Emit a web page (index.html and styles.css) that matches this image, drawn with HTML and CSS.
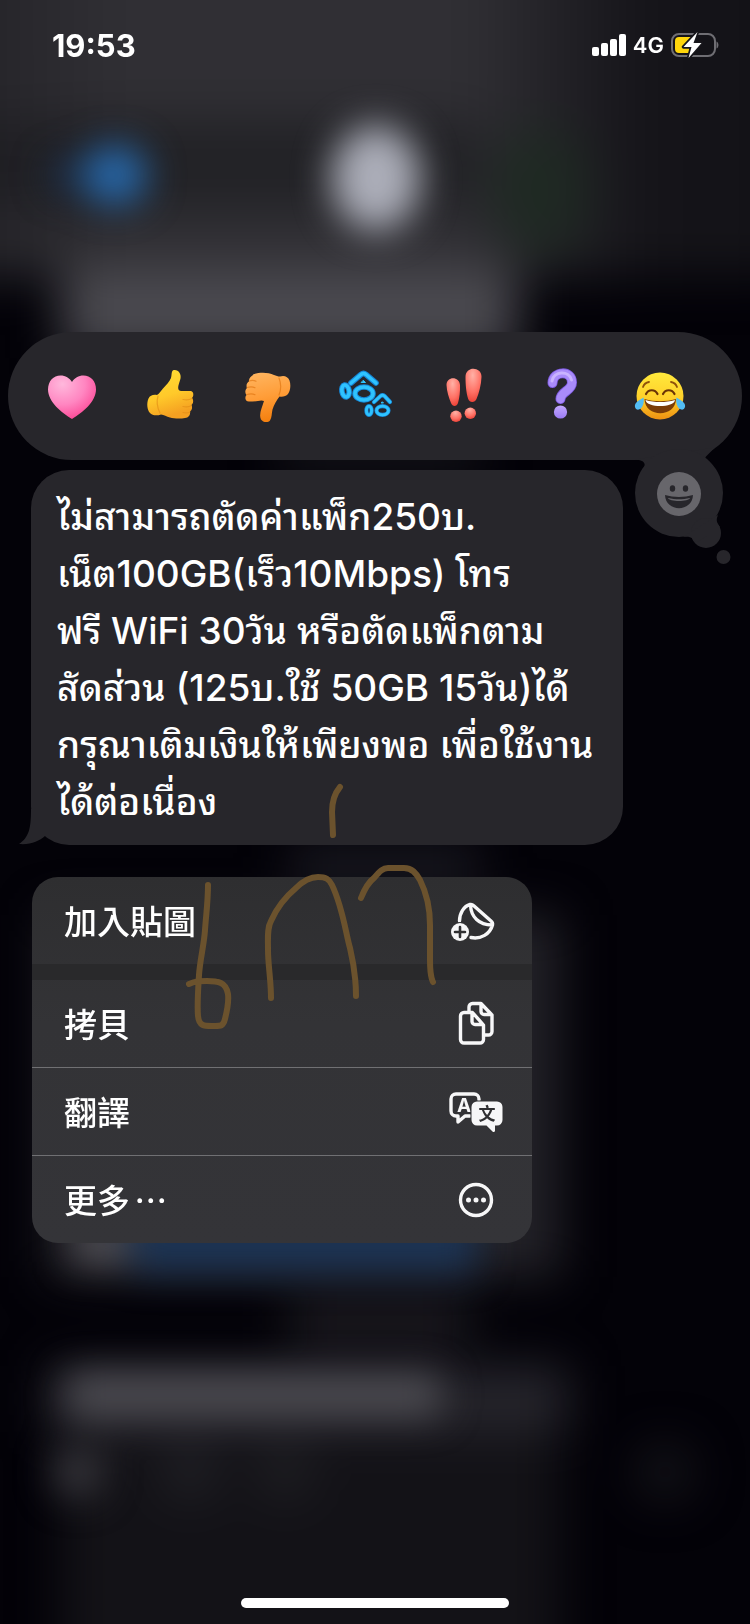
FILE: index.html
```html
<!DOCTYPE html>
<html lang="zh-Hant">
<head>
<meta charset="utf-8">
<meta name="viewport" content="width=device-width, initial-scale=1">
<title>訊息</title>
<link rel="stylesheet" href="styles.css">
</head>
<body>
<div class="screen">
  <svg class="backdrop" viewBox="0 0 750 1624" preserveAspectRatio="none" aria-hidden="true">
    <defs>
      <filter id="soft" x="-50%" y="-50%" width="200%" height="200%" color-interpolation-filters="sRGB"><feGaussianBlur stdDeviation="24"/></filter>
      <filter id="mid" x="-80%" y="-80%" width="260%" height="260%" color-interpolation-filters="sRGB"><feGaussianBlur stdDeviation="18"/></filter>
      <linearGradient id="head" x1="0" x2="1" y1="0" y2="0">
        <stop offset="0" stop-color="#212025"/><stop offset=".22" stop-color="#302f34"/><stop offset=".6" stop-color="#302f34"/><stop offset=".8" stop-color="#151419"/><stop offset="1" stop-color="#121116"/>
      </linearGradient>
    </defs>
    <rect width="750" height="1624" fill="#030208"/>
    <g filter="url(#soft)">
      <rect x="-80" y="-80" width="910" height="358" fill="url(#head)"/>
      <rect x="-80" y="120" width="560" height="88" fill="#1d1c21" opacity=".7"/>
      <ellipse cx="540" cy="190" rx="50" ry="64" fill="#1f2923"/>
      <rect x="62" y="268" width="455" height="90" fill="#4a494f"/>
      <rect x="280" y="440" width="200" height="30" fill="#1a191f"/>
      <rect x="290" y="850" width="190" height="30" fill="#22212a"/>
      <rect x="48" y="915" width="512" height="362" fill="#232228"/>
      <rect x="290" y="1302" width="180" height="40" fill="#1f1e23"/>
      <rect x="48" y="1366" width="520" height="66" fill="#26252c"/>
      <rect x="60" y="1430" width="500" height="290" fill="#131217"/>
      <circle cx="665" cy="1472" r="28" fill="#15141a"/>
      <circle cx="190" cy="1472" r="26" fill="#222227"/>
      <circle cx="285" cy="1472" r="26" fill="#202024"/>
    </g>
    <g filter="url(#mid)">
      <ellipse cx="72" cy="175" rx="24" ry="16" fill="#1c2f49"/>
      <ellipse cx="115" cy="175" rx="32" ry="30" fill="#2768aa"/>
      <ellipse cx="376" cy="178" rx="45" ry="53" fill="#acaeb9"/>
      <rect x="72" y="1225" width="56" height="38" fill="#535258"/>
      <rect x="132" y="1210" width="344" height="62" fill="#1c3455"/>
      <rect x="66" y="1374" width="376" height="42" rx="12" fill="#4d4c52"/>
      <circle cx="78" cy="1472" r="26" fill="#35343a"/>
    </g>
  </svg>

  <header class="status">
    <time class="clock">19:53</time>
    <div class="signals">
      <svg class="bars" width="34" height="22" viewBox="0 0 34 22" fill="#fff" role="img" aria-label="訊號">
        <rect y="13" width="7" height="9" rx="2"/><rect x="9" y="9" width="7" height="13" rx="2"/><rect x="18" y="5" width="7" height="17" rx="2"/><rect x="27" width="7" height="22" rx="2"/>
      </svg>
      <span class="network">4G</span>
      <svg class="battery" width="48" height="26" viewBox="0 0 48 26" role="img" aria-label="充電中">
        <rect x="1" y="2" width="43" height="22" rx="7" fill="none" stroke="#6f6e73" stroke-width="2"/>
        <path d="M45.500 9.500c2.600 1 2.600 6 0 7z" fill="#6f6e73"/>
        <path d="M8 5h14l-8 10h6l-2 6H8a4 4 0 0 1-4-4V9a4 4 0 0 1 4-4z" fill="#ffd60b"/>
        <path d="M26.500 0 12.500 15h8l-3 11 13-15h-8z" fill="#fff" stroke="#17161b" stroke-width="3.400" paint-order="stroke" stroke-linejoin="round"/>
      </svg>
    </div>
  </header>

  <main class="content">
    <section class="reactions" aria-label="點按回應">
      <div class="reaction-bar">
        <button class="reaction" aria-label="愛心">
          <svg viewBox="0 0 60 60"><defs><radialGradient id="h" cx=".3" cy=".2" r=".85"><stop offset="0" stop-color="#ffb8dc"/><stop offset=".55" stop-color="#ff86c1"/><stop offset="1" stop-color="#fb4795"/></radialGradient></defs>
          <path d="M30 53C20 47 6 36 6 23.500 6 15 11.500 9.500 18.500 9.500c5 0 9 2.500 11.500 6.500 2.500-4 6.500-6.500 11.500-6.500C48.500 9.500 54 15 54 23.500 54 36 40 47 30 53z" fill="url(#h)"/></svg>
        </button>
        <button class="reaction" aria-label="讚">
          <svg viewBox="0 0 60 60"><defs><linearGradient id="t" x1="0" x2=".3" y1="0" y2="1"><stop offset="0" stop-color="#ffe035"/><stop offset=".6" stop-color="#ffc92a"/><stop offset="1" stop-color="#f5a021"/></linearGradient></defs>
          <path d="M34 4c4.500-.5 7.500 4 6.500 8.500-1 4-3 8-2 11 .5 1.500 2 1.500 4 1.500h8c3.500 0 3.500 5.500 1.500 7 1.800 2 1.500 5.500-.5 7 1.200 2.500.5 5-1.500 6.500.5 4-1.500 6-5 6.600-4.500.8-11 .7-15-.6-3.500-1-6-2.500-9-3-4 1.500-9 1-11-1.500C7 44 6.500 37 8.500 32.500c1.500-3 4.500-4.200 8.500-3.500 2.500-1.500 4-4.500 6-6.500 3-3.500 6.500-6.500 8-10.500C32 9 31 4.500 34 4z" fill="url(#t)"/>
          <path d="M43 33.500c4 .8 6 .7 9-1M43 40.500c4 .8 6 .7 8.500-1M43 46.500c3 .8 5 .7 7-.5M18 30c-1.500 5-.5 12 2 17" fill="none" stroke="#e08a14" stroke-width="1.200" stroke-linecap="round" opacity=".6"/></svg>
        </button>
        <button class="reaction" aria-label="倒讚">
          <svg viewBox="0 0 60 60"><defs><linearGradient id="d" x1="0" x2=".2" y1="0" y2="1"><stop offset="0" stop-color="#ffb763"/><stop offset=".55" stop-color="#ff9d38"/><stop offset="1" stop-color="#f58212"/></linearGradient></defs>
          <path d="M15 8.500C21 6 30 6 36 9c2 .8 4 1.500 6 1.500 4-1.500 8 0 9.500 4 1.500 4.500 1 10-1.500 13.500-2 2.500-5.500 3-8.500 2.500-3 4-5.500 8-7 13-1 4-.5 8-2.500 11-2 2.500-7 2-9-1-2.500-5 1-12 3-18.500-2-1-4-.5-6 0-3 .5-6 .5-9 .5-4 0-4.500-4.500-2.500-6.500-1.800-2-1.500-5.500.5-7-1.200-3 0-5.500 2-6.500-.3-3 1.500-5 4-6.500z" fill="url(#d)"/>
          <path d="M9 28.500c3-1 6-.8 8 .2M9 21.500c3-1 6-.8 8 .2M11 15c3-1 5-.8 7 .2M41 12c2 5 2 12 0 17" fill="none" stroke="#dc6f0c" stroke-width="1.200" stroke-linecap="round" opacity=".6"/></svg>
        </button>
        <button class="reaction" aria-label="哈哈">
          <svg viewBox="0 0 60 60" fill="none" stroke-linecap="round" stroke-linejoin="round">
            <g stroke="#1687d8" stroke-width="5.600"><path d="M15 17 25 8.500q2.500-2 5 0L40 17"/><ellipse cx="28" cy="27.500" rx="9" ry="6.500"/><ellipse cx="9.500" cy="25" rx="3.600" ry="6" transform="rotate(-10 9.500 25)"/><path d="m38 36 6.500-6q2-1.500 4 0l5.500 6" stroke-width="4.200"/><ellipse cx="46.500" cy="44.500" rx="6" ry="4.300" stroke-width="4.200"/><ellipse cx="33" cy="44.500" rx="2.600" ry="4.300" stroke-width="4.200"/></g>
            <g stroke="#2fc3ff" stroke-width="3.600"><path d="M15 17 25 8.500q2.500-2 5 0L40 17"/><ellipse cx="28" cy="27.500" rx="9" ry="6.500"/><ellipse cx="9.500" cy="25" rx="3.600" ry="6" transform="rotate(-10 9.500 25)"/><path d="m38 36 6.500-6q2-1.500 4 0l5.500 6" stroke-width="2.800"/><ellipse cx="46.500" cy="44.500" rx="6" ry="4.300" stroke-width="2.800"/><ellipse cx="33" cy="44.500" rx="2.600" ry="4.300" stroke-width="2.800"/></g>
            <path d="m27.500 14.500 2 2h-4zM46.500 36l1 1h-2z" fill="#2fc3ff" stroke="#2fc3ff"/>
          </svg>
        </button>
        <button class="reaction" aria-label="強調">
          <svg viewBox="0 0 60 60"><defs><radialGradient id="e" cx=".45" cy=".2" r=".85"><stop offset="0" stop-color="#ffb1a6"/><stop offset=".6" stop-color="#ff7165"/><stop offset="1" stop-color="#e93d32"/></radialGradient></defs>
          <g fill="url(#e)"><path d="M12.500 19c0-9 13-9 13.500 0 .3 6-.5 13-2 18-1.200 4-5.500 4-7 0-2-5-4.300-12-4.500-18z"/><path d="M31.500 11c0-11.500 16.500-10.500 16 0-.3 8-2.500 16-5 22-1.600 4-7 4-8.300 0-2-6-2.700-15-2.700-22z"/><circle cx="22" cy="50.300" r="5.700"/><circle cx="36.300" cy="47.300" r="5.700"/></g></svg>
        </button>
        <button class="reaction" aria-label="問號">
          <svg viewBox="0 0 60 60"><defs><linearGradient id="q" x1="0" x2="0" y1="0" y2="1"><stop offset="0" stop-color="#c3a8ff"/><stop offset="1" stop-color="#9a7af4"/></linearGradient></defs>
          <g fill="none" stroke-linecap="round" stroke-linejoin="round"><path d="M20.500 17C21 4.500 40 4 40 16.500 40 25 29 25 28.500 33" stroke="#7d5ae0" stroke-width="10"/><path d="M20.500 17C21 4.500 40 4 40 16.500 40 25 29 25 28.500 33" stroke="#a98bfa" stroke-width="8.400"/><path d="M20 15C21.500 5 37 4 39.500 14" stroke="#c9b3ff" stroke-width="3"/></g>
          <circle cx="28.500" cy="46" r="6.600" fill="url(#q)"/></svg>
        </button>
        <button class="reaction" aria-label="笑到流淚">
          <svg viewBox="0 0 60 60"><defs><linearGradient id="j" x1="0" x2="0" y1="0" y2="1"><stop offset="0" stop-color="#ffe93c"/><stop offset=".55" stop-color="#ffd02a"/><stop offset="1" stop-color="#ee9012"/></linearGradient></defs>
          <circle cx="30" cy="30" r="23.500" fill="url(#j)"/>
          <path d="M14.500 33c10 3 21 3 31.500 0-.5 19-31 19-31.500 0z" fill="#7a3c08"/>
          <path d="M15.500 34c9.500 2.700 20 2.700 29.500 0-1 8-28.500 8-29.500 0z" fill="#fff"/>
          <path d="M16 28c2.500-5 9-5 11.500 0M33 28c2.500-5 9-5 11.500 0" fill="none" stroke="#6b3406" stroke-width="2.200" stroke-linecap="round"/>
          <path d="M13 21c1-3 3-4.500 6-5M47 21c-1-3-3-4.500-6-5" fill="none" stroke="#8f520b" stroke-width="1.800" stroke-linecap="round"/>
          <path d="M13.500 31.500c1 5-.5 10.500-4.500 12C5.500 44.500 3.500 40 6 37c2-2.500 5-3.500 7.500-5.500zM46.500 31.500c-1 5 .5 10.500 4.500 12 3.500 1 5.500-3.500 3-6.500-2-2.500-5-3.500-7.500-5.500z" fill="#52bdf5"/></svg>
        </button>
      </div>
      <button class="more-emoji" aria-label="更多表情符號">
        <svg viewBox="0 0 112 132">
          <g fill="#27262b"><path d="M5 19.500c9 .5 12 4 8 11l37 10 34-12c-6-5-12-9-7-13l8-8z"/><circle cx="49" cy="53" r="44"/><circle cx="76" cy="93" r="15"/><path d="M53 97c9-1 10 2 13 6l24-16c-5-6-3-9-2-12z"/><circle cx="93.500" cy="117" r="7"/></g>
          <circle cx="49" cy="54" r="22" fill="#67666b"/>
          <g fill="#27262b"><ellipse cx="42.500" cy="48.500" rx="2.700" ry="3.200"/><ellipse cx="55.500" cy="48.500" rx="2.700" ry="3.200"/><path d="M35 55c9 2.500 19 2.500 28 0-.5 17.500-27.500 17.500-28 0z"/></g>
          <path d="M38 58c8 1.800 14 1.800 22 0-1 4-21 4-22 0z" fill="#67666b"/>
        </svg>
      </button>
    </section>

    <article class="bubble" lang="th">
      <p class="message">ไม่สามารถตัดค่าแพ็ก250บ.<br>เน็ต100GB(เร็ว10Mbps) โทร<br>ฟรี WiFi 30วัน หรือตัดแพ็กตาม<br>สัดส่วน (125บ.ใช้ 50GB 15วัน)ได้<br>กรุณาเติมเงินให้เพียงพอ เพื่อใช้งาน<br>ได้ต่อเนื่อง</p>
      <svg class="tail" viewBox="0 0 30 36" aria-hidden="true"><path d="M12 0c0 20-2 28-12 35 12 1 20-3 26-8V0z"/></svg>
    </article>

    <nav class="menu" aria-label="訊息選單">
      <button class="item">
        <span>加入貼圖</span>
        <svg viewBox="0 0 56 48" class="icon"><path d="M11.500 24C11.500 16 16 9 22 7.500q2-.5 3.500 1L43 24q2 1.700 1.500 4C42 37 33 42.500 23 40.500M22.500 8C23 20 31 28 44 28"/><circle cx="12" cy="35" r="9" class="solid"/><path d="M12 30v10M7 35h10" class="cut"/></svg>
      </button>
      <div class="divider"></div>
      <button class="item">
        <span>拷貝</span>
        <svg viewBox="0 0 56 48" class="icon"><path d="M21 11V7a3.500 3.500 0 0 1 3.500-3.500H33L44 15v16.500a3.500 3.500 0 0 1-3.500 3.500H37M33 4v7.500a3 3 0 0 0 3 3h7.500"/><path d="M16 12.500h8.500L35.500 25v14.500a3.500 3.500 0 0 1-3.500 3.500H16a3.500 3.500 0 0 1-3.500-3.500V16a3.500 3.500 0 0 1 3.500-3.500zM24 13v8.500a3 3 0 0 0 3 3h8"/></svg>
      </button>
      <button class="item">
        <span>翻譯</span>
        <svg viewBox="0 0 56 48" class="icon"><path d="M31 12v-1a5 5 0 0 0-5-5H8a5 5 0 0 0-5 5v12a5 5 0 0 0 5 5h2v6l7-6h5"/><text x="16" y="24" class="latin">A</text><path class="solid" d="M29 13.500h20a5.500 5.500 0 0 1 5.500 5.500v13a5.500 5.500 0 0 1-5.500 5.500h-2v5c0 1.500-1.500 2-2.500 1l-6-6H29a5.500 5.500 0 0 1-5.500-5.500V19a5.500 5.500 0 0 1 5.500-5.500z"/><text x="39" y="32" class="han">文</text></svg>
      </button>
      <button class="item">
        <span>更多&#8202;&#8202;⋯</span>
        <svg viewBox="0 0 56 48" class="icon"><circle cx="28" cy="24" r="15.500"/><g class="solid"><circle cx="20.500" cy="24" r="2.500"/><circle cx="28" cy="24" r="2.500"/><circle cx="35.500" cy="24" r="2.500"/></g></svg>
      </button>
    </nav>
  </main>

  <div class="home-indicator"></div>

  <svg class="ink" viewBox="0 0 750 300" aria-hidden="true">
    <path d="M340 27C335 33 332 42 332 52L333 75"/>
    <path d="M208 125C208 142 206 155 205 170S200 200 199 215C198 232 197 245 198 256 199 266 204 266 212 266S223 267 225 259 229 242 228 234C226 222 218 221 207 221 199 221 196 221 189 224"/>
    <path d="M271 238C271 220 268 205 268 190 268 178 267 168 271 161 278 145 290 133 296 128 304 120 312 117 318 117 326 117 329 119 332 125 343 148 346 175 350 188 354 205 356 222 356 236"/>
    <path d="M361 138C365 128 370 121 374 118 380 111 383 108 388 108H404C412 108 416 113 420 120 427 134 430 150 430 165V200C430 210 431 218 433 222"/>
  </svg>
</div>
</body>
</html>
```

FILE: styles.css
```css
* { box-sizing: border-box; }

body {
  margin: 0;
  background: #030208;
  color: #fff;
  font-family: Inter, "Noto Sans Thai Looped", "Noto Looped Thai", Loma, Waree, Garuda, "Noto Sans Thai", "Noto Sans CJK TC", sans-serif;
}

button {
  margin: 0;
  padding: 0;
  border: 0;
  background: none;
  color: inherit;
  font: inherit;
  cursor: pointer;
}

svg { display: block; }

.screen {
  position: relative;
  display: flex;
  flex-direction: column;
  min-height: 100vh;
  overflow: hidden;
}

.backdrop {
  position: absolute;
  inset: 0;
  width: 100%;
  height: 100%;
}

.status {
  position: relative;
  display: flex;
  align-items: center;
  justify-content: space-between;
  height: 90px;
  padding: 0 31px 0 52px;
}

.clock {
  font-size: 31px;
  font-weight: 700;
}

.signals {
  display: flex;
  align-items: center;
  gap: 7px;
}

.network {
  font-size: 22px;
  font-weight: 600;
}

.content {
  position: relative;
  display: flex;
  flex-direction: column;
  padding-top: 242px;
}

.reactions {
  position: relative;
  margin: 0 8px;
}

.reaction-bar {
  display: flex;
  align-items: center;
  height: 128px;
  padding: 0 33px 0 15px;
  border-radius: 64px;
  background: #27262b;
}

.reaction {
  display: flex;
  flex: 1;
  justify-content: center;
}

.reaction svg {
  width: 60px;
  height: 60px;
}

.more-emoji {
  position: absolute;
  top: 108px;
  right: 0;
  width: 112px;
  height: 132px;
}

.bubble {
  position: relative;
  max-width: 592px;
  margin: 10px 31px 0;
  padding: 18px 26px 15px;
  border-radius: 38px;
  background: #27262b;
}

.message {
  margin: 0;
  font-size: 37px;
  font-weight: 500;
  line-height: 57px;
  white-space: nowrap;
}

.tail {
  position: absolute;
  left: -12px;
  bottom: 0;
  width: 30px;
  height: 36px;
  fill: #27262b;
}

.menu {
  display: flex;
  flex-direction: column;
  max-width: 500px;
  margin: 32px 32px 0;
  overflow: hidden;
  border-radius: 26px;
  background: linear-gradient(#2e2e30, #333336 40%, #343438);
}

.item {
  display: flex;
  align-items: center;
  justify-content: space-between;
  height: 87px;
  padding: 0 28px 0 32px;
  font-family: "Noto Sans CJK TC", sans-serif;
  font-size: 33px;
  font-weight: 500;
}

.item span { padding-bottom: 2px; }

.item + .item {
  height: 88px;
  border-top: 1px solid #707073;
}

.divider {
  height: 16px;
  background: #29292b;
}

.icon {
  width: 56px;
  height: 48px;
  fill: none;
  stroke: #f7f7f8;
  stroke-width: 3.4;
  stroke-linecap: round;
  stroke-linejoin: round;
}

.icon .solid {
  fill: #f7f7f8;
  stroke: #333335;
  stroke-width: 2;
  paint-order: stroke;
}

.icon .cut {
  stroke: #303032;
  stroke-width: 2.6;
}

.icon g.solid { stroke: none; }

.icon text {
  stroke: none;
  text-anchor: middle;
}

.latin {
  fill: #f7f7f8;
  font: 700 19px Inter, sans-serif;
}

.han {
  fill: #303032;
  font: 700 17px "Noto Sans CJK TC", sans-serif;
}

.home-indicator {
  position: relative;
  align-self: center;
  width: 268px;
  height: 10px;
  margin: auto 0 16px;
  border-radius: 5px;
  background: #fff;
}

.ink {
  position: absolute;
  top: 760px;
  left: 0;
  width: 750px;
  height: 300px;
  fill: none;
  stroke: #6b522d;
  stroke-width: 6;
  stroke-linecap: round;
  stroke-linejoin: round;
  pointer-events: none;
}
```
